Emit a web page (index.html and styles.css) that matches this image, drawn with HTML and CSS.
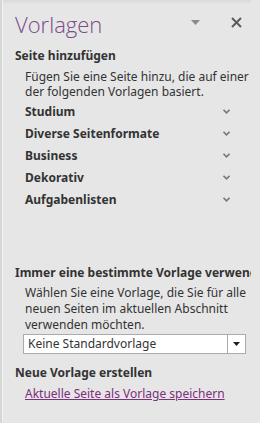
FILE: index.html
```html
<!DOCTYPE html>
<html lang="de">
<head>
    <meta charset="UTF-8">
    <title>Vorlagen</title>
    <link rel="stylesheet" href="styles.css">
</head>
<body>
    <div class="pane">
        <div class="pane-head">
            <h1 class="pane-title">Vorlagen</h1>
            <span class="head-btn menu-btn">
                <svg width="9" height="5" viewBox="0 0 9 5"><path d="M0 0H9L4.5 5Z" fill="#8a8a8a"/></svg>
            </span>
            <span class="head-btn close-btn">
                <svg width="11" height="11" viewBox="0 0 11 11"><path d="M1 1L10 10M10 1L1 10" stroke="#5c5c5c" stroke-width="2"/></svg>
            </span>
        </div>

        <h2 class="section-title">Seite hinzufügen</h2>
        <p class="section-text">Fügen Sie eine Seite hinzu, die auf einer der folgenden Vorlagen basiert.</p>

        <ul class="groups">
            <li><span>Studium</span><svg class="chev" width="7" height="5" viewBox="0 0 7 5"><path d="M0.5 0.8L3.5 3.8L6.5 0.8" fill="none" stroke="#7a7a7a" stroke-width="1.6"/></svg></li>
            <li><span>Diverse Seitenformate</span><svg class="chev" width="7" height="5" viewBox="0 0 7 5"><path d="M0.5 0.8L3.5 3.8L6.5 0.8" fill="none" stroke="#7a7a7a" stroke-width="1.6"/></svg></li>
            <li><span>Business</span><svg class="chev" width="7" height="5" viewBox="0 0 7 5"><path d="M0.5 0.8L3.5 3.8L6.5 0.8" fill="none" stroke="#7a7a7a" stroke-width="1.6"/></svg></li>
            <li><span>Dekorativ</span><svg class="chev" width="7" height="5" viewBox="0 0 7 5"><path d="M0.5 0.8L3.5 3.8L6.5 0.8" fill="none" stroke="#7a7a7a" stroke-width="1.6"/></svg></li>
            <li><span>Aufgabenlisten</span><svg class="chev" width="7" height="5" viewBox="0 0 7 5"><path d="M0.5 0.8L3.5 3.8L6.5 0.8" fill="none" stroke="#7a7a7a" stroke-width="1.6"/></svg></li>
        </ul>

        <h2 class="section-title default-title">Immer eine bestimmte Vorlage verwenden</h2>
        <p class="section-text">Wählen Sie eine Vorlage, die Sie für alle neuen Seiten im aktuellen Abschnitt verwenden möchten.</p>
        <div class="select">
            <span class="select-value">Keine Standardvorlage</span>
            <span class="select-arrow">
                <svg width="7" height="4" viewBox="0 0 7 4"><path d="M0 0H7L3.5 4Z" fill="#1e1e1e"/></svg>
            </span>
        </div>

        <h2 class="section-title new-title">Neue Vorlage erstellen</h2>
        <a class="save-link" href="#">Aktuelle Seite als Vorlage speichern</a>
    </div>
</body>
</html>
```

FILE: styles.css
```css
body {
    margin: 0;
    background: #e6e6e6;
    font-family: 'Noto Sans', 'Open Sans', sans-serif;
    color: #333;
}

.pane {
    width: 251px;
    height: 423px;
    overflow: hidden;
    box-sizing: border-box;
    padding-left: 15px;
    background: linear-gradient(#d9d9d9, #e6e6e6 4px);
    box-shadow: inset 2px 0 0 #d6d6d6, inset 3px 0 0 #f2f2f2;
}

.pane-head {
    display: flex;
    align-items: center;
    height: 45px;
}

.pane-title {
    margin: 0;
    flex: 1;
    font-family: 'Open Sans', 'Noto Sans', sans-serif;
    font-size: 22px;
    font-weight: 300;
    color: #7b4a87;
    padding-top: 3px;
}

.head-btn {
    display: flex;
    align-items: center;
    justify-content: center;
}

.menu-btn {
    width: 12px;
    margin-right: 29px;
}

.close-btn {
    width: 12px;
    margin-right: 9px;
}

.section-title {
    margin: 0;
    font-size: 12px;
    font-weight: bold;
    color: #333;
    white-space: nowrap;
    line-height: 22px;
}

.section-text {
    margin: 0 0 0 10px;
    font-size: 12px;
    line-height: 15px;
    padding-top: 2px;
}

.groups {
    list-style: none;
    margin: 1px 0 0 10px;
    padding: 0;
}

.groups li {
    display: flex;
    align-items: center;
    justify-content: space-between;
    height: 22px;
    font-size: 12px;
    font-weight: bold;
}

.chev {
    margin-right: 21px;
}

.default-title {
    margin-top: 52px;
}

.default-title + .section-text {
    line-height: 16px;
    padding-top: 1px;
}

.select {
    display: flex;
    margin: 1px 0 0 8px;
    width: 223px;
    height: 20px;
    box-sizing: border-box;
    border: 1px solid #ababab;
    background: #fff;
    font-size: 12px;
}

.select-value {
    flex: 1;
    padding-left: 4px;
    line-height: 18px;
}

.select-arrow {
    width: 17px;
    border-left: 1px solid #ababab;
    display: flex;
    align-items: center;
    justify-content: center;
}

.new-title {
    margin-top: 8px;
}

.save-link {
    display: block;
    margin: 1px 0 0 10px;
    font-size: 12px;
    color: #7b2f7c;
}
```
